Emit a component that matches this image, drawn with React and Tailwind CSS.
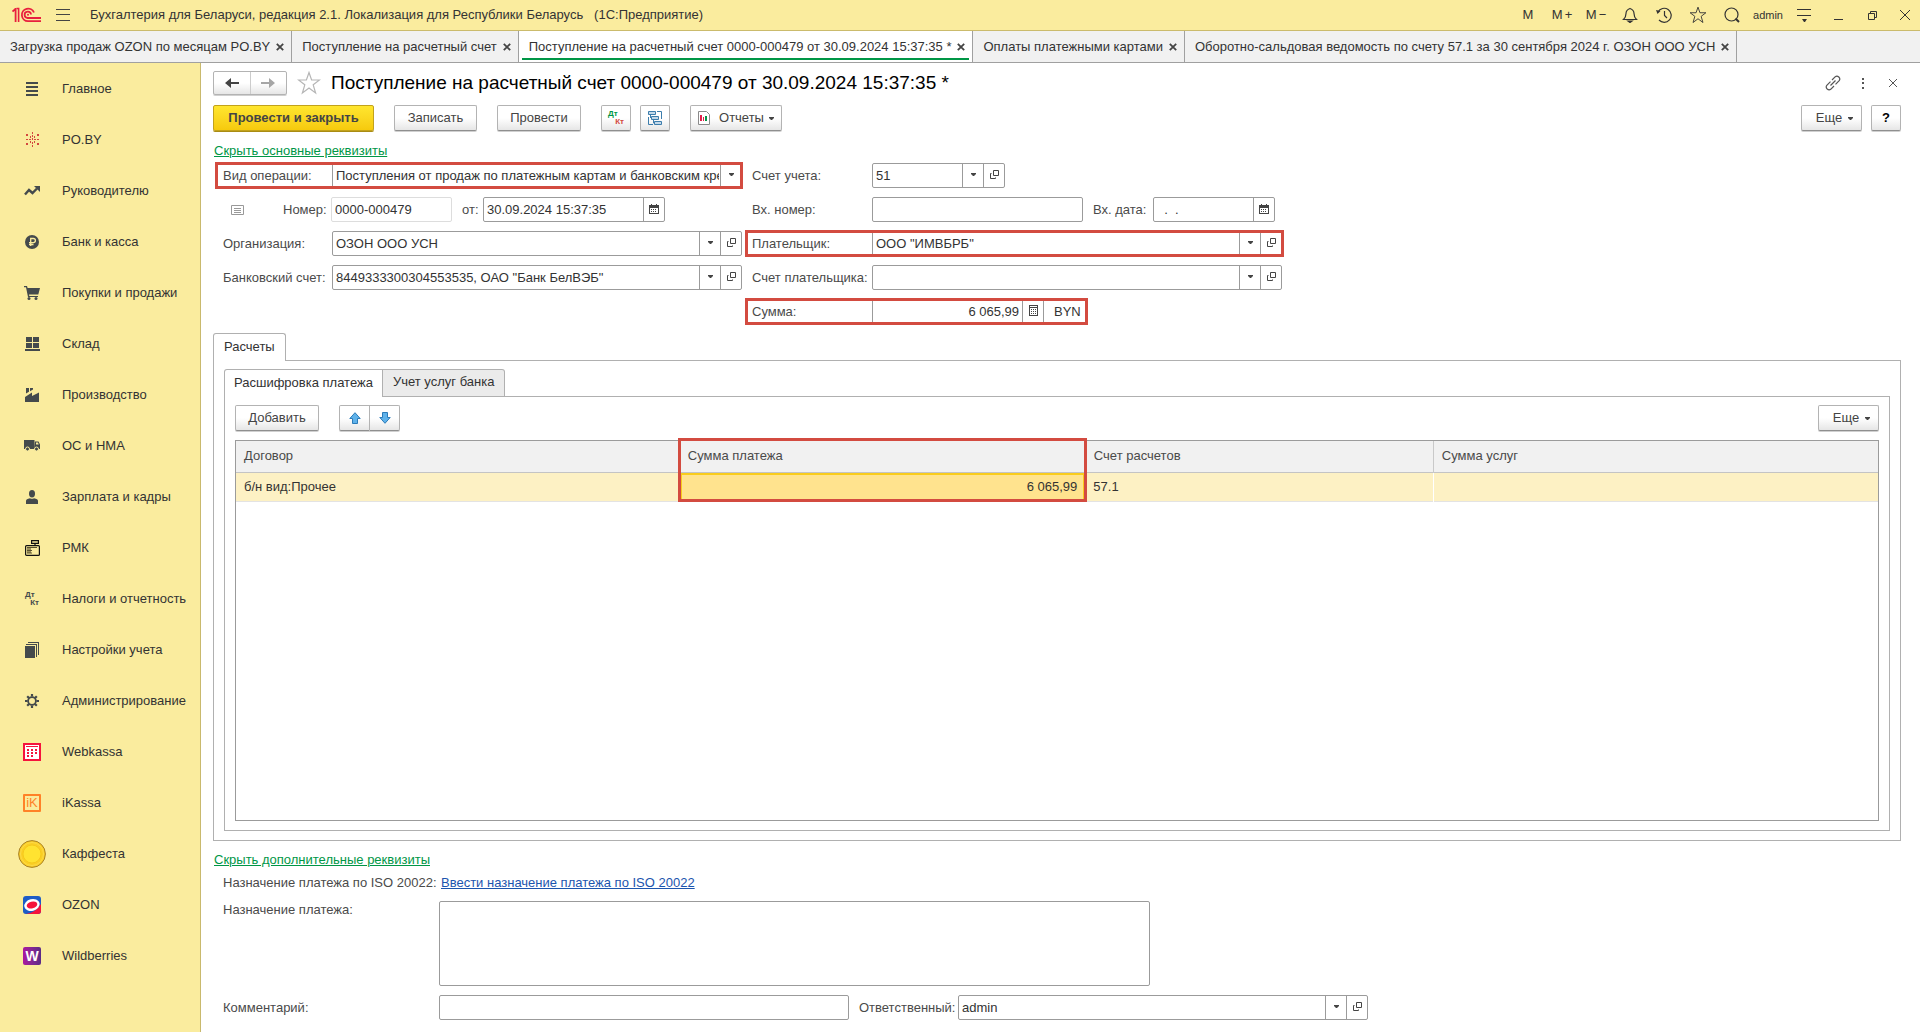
import React, { useState } from "react";

const Logo = () => (
  <svg width="30" height="16" viewBox="0 0 30 16" fill="none" stroke="#e8203e" strokeWidth="1.8">
    <path d="M0.5 4.5 L3.5 2 M3.6 1 V15" />
    <path d="M6.6 1 V15 M4.5 1.5 H7.4" strokeWidth="1.6" />
    <path d="M22 5.5 A6.3 6.3 0 1 0 16 14.2 H29" />
    <path d="M19 7.5 A3.2 3.2 0 1 0 16 11 H29" />
    <circle cx="16" cy="7.8" r="1" fill="#e8203e" stroke="none" />
  </svg>
);

const CaretIcon = () => (
  <svg width="5" height="3" viewBox="0 0 5 3" fill="#444"><path d="M0 0 H5 V1 L3 3 H2 L0 1 Z" /></svg>
);

const OpenIcon = () => (
  <svg width="9" height="9" viewBox="0 0 9 9" fill="none" stroke="#444">
    <path d="M3.5 0.5 H8.5 V5.5 H3.5 Z M1.5 3.5 H0.5 V8.5 H5.5 V7.5" />
  </svg>
);

const CalendarIcon = () => (
  <svg width="10" height="10" viewBox="0 0 10 10" fill="#444">
    <path d="M0 1 H2 V0 H3 V1 H7 V0 H8 V1 H10 V10 H0 Z M1 4 V9 H9 V4 Z" fillRule="evenodd" />
    <path d="M2 5h1v1h-1z M4 5h1v1h-1z M6 5h1v1h-1z M2 7h1v1h-1z M4 7h1v1h-1z M6 7h1v1h-1z" />
  </svg>
);

const CalcIcon = () => (
  <svg width="9" height="11" viewBox="0 0 9 11" fill="#444">
    <path d="M0 0 H9 V11 H0 Z M1 1 V2 H8 V1 Z M1 3 V10 H8 V3 Z" fillRule="evenodd" />
    <path d="M2 4h1v1h-1z M4 4h1v1h-1z M6 4h1v1h-1z M2 6h1v1h-1z M4 6h1v1h-1z M6 6h1v1h-1z M2 8h1v1h-1z M4 8h1v1h-1z M6 8h1v1h-1z" />
  </svg>
);

const StarIcon = ({ size, color }) => (
  <svg width={size} height={size} viewBox="0 0 24 24" fill="none" stroke={color} strokeWidth="1.2">
    <path d="M12 1.5 L14.6 9 H22.5 L16.2 13.8 L18.6 22 L12 17 L5.4 22 L7.8 13.8 L1.5 9 H9.4 Z" />
  </svg>
);

const sections = [
  { name: "Главное", icon: <svg width="12" height="14" fill="#444a4c"><path d="M0 0h12v2H0z M0 4h12v2H0z M0 8h12v2H0z M0 12h12v2H0z" /></svg> },
  {
    name: "PO.BY",
    icon: (
      <svg width="13" height="15" viewBox="0 0 13 15" fill="#d3483e">
        <path d="M6 0h1v2H6z M6 3h1v2H6z M6 6h1v2H6z M6 10h1v2H6z M6 13h1v2H6z M4 4h1v2H4z M0 2h2v2H0z M8 4h1v2H8z M11 2h2v2h-2z M4 9h1v2H4z M0 11h2v2H0z M8 9h1v2H8z M11 11h2v2h-2z M0 7h2v1H0z M3 7h2v1H3z M8 7h2v1H8z M11 7h2v1h-2z" />
      </svg>
    ),
  },
  {
    name: "Руководителю",
    icon: (
      <svg width="16" height="10" viewBox="0 0 16 10">
        <path d="M1 8.5 L5 4 L8.5 7 L13 2.5" fill="none" stroke="#444a4c" strokeWidth="2.4" />
        <path d="M10 0 H16 V6 Z" fill="#444a4c" />
      </svg>
    ),
  },
  {
    name: "Банк и касса",
    icon: (
      <svg width="14" height="14" viewBox="0 0 14 14">
        <circle cx="7" cy="7" r="7" fill="#444a4c" />
        <path d="M5.7 11 V3.5 H8.3 A2.1 2.1 0 0 1 8.3 7.7 H4 M4 9.5 H8.5" fill="none" stroke="#faec9e" strokeWidth="1.3" />
      </svg>
    ),
  },
  {
    name: "Покупки и продажи",
    icon: (
      <svg width="16" height="14" viewBox="0 0 16 14" fill="#444a4c">
        <path d="M0 0 H3 L3.6 2 H16 L14.3 8.5 H5 L5.3 10 H14 V11 H4 L2 1.2 H0 Z" />
        <circle cx="5" cy="12.5" r="1.5" /><circle cx="12" cy="12.5" r="1.5" />
      </svg>
    ),
  },
  { name: "Склад", icon: <svg width="15" height="14" fill="#444a4c"><path d="M1 0h6v5H1z M8 0h6v5H8z M1 6h6v5H1z M8 6h6v5H8z M0 12h15v2H0z" /></svg> },
  {
    name: "Производство",
    icon: (
      <svg width="14" height="14" viewBox="0 0 14 14" fill="#444a4c">
        <path d="M0 14 V9 L7 4.5 V8 L14 4.5 V14 Z M1 0 H4 V3.8 L1 5.6 Z M5 0 H8 V1.5 L5 3.2 Z" />
      </svg>
    ),
  },
  {
    name: "ОС и НМА",
    icon: (
      <svg width="16" height="11" viewBox="0 0 16 11" fill="#444a4c">
        <path d="M0 0 H10.5 V9 H0 Z M11 1.5 H14.5 L16 4.5 V9 H10.5 Z M12 2.5 V4.5 H14.8 L13.9 2.5 Z" fillRule="evenodd" />
        <circle cx="3.5" cy="9" r="2" stroke="#faec9e" /><circle cx="12.5" cy="9" r="2" stroke="#faec9e" />
      </svg>
    ),
  },
  {
    name: "Зарплата и кадры",
    icon: (
      <svg width="12" height="14" viewBox="0 0 12 14" fill="#444a4c">
        <ellipse cx="6" cy="3.7" rx="3" ry="3.7" /><path d="M0 14 V11 Q0 9 4 8.3 Q6 9.3 8 8.3 Q12 9 12 11 V14 Z" />
      </svg>
    ),
  },
  {
    name: "РМК",
    icon: (
      <svg width="15" height="16" viewBox="0 0 15 16" fill="none" stroke="#111" strokeWidth="1.2">
        <rect x="0.6" y="5.6" width="13.8" height="9.8" rx="1" /><path d="M6.6 0.6 H13.4 V3.4 H6.6 Z M10 3.5 V5.5" />
        <path d="M2 7.5 H12 M3 8 V13 M5 8 V13 M2 10.5 H7 M2 13 H7" stroke="#5a522c" strokeWidth="1.2" />
      </svg>
    ),
  },
  {
    name: "Налоги и отчетность",
    icon: (
      <span className="flex w-[14px] flex-col text-[8px] leading-[8px] font-bold text-[#444a4c]">
        <span>Дт</span><span className="text-right">Кт</span>
      </span>
    ),
  },
  {
    name: "Настройки учета",
    icon: (
      <svg width="14" height="16" fill="#444a4c"><path d="M0 4h10v12H0z M1 2h11v13h-1V3H1z M3 0h11v13h-1V1H3z" /></svg>
    ),
  },
  {
    name: "Администрирование",
    icon: (
      <svg width="14" height="14" viewBox="0 0 14 14" fill="none" stroke="#444a4c">
        <circle cx="7" cy="7" r="3.9" strokeWidth="1.8" />
        <path d="M7 0 V2.6 M7 11.4 V14 M0 7 H2.6 M11.4 7 H14 M2.2 2.2 L4 4 M10 10 L11.8 11.8 M2.2 11.8 L4 10 M10 4 L11.8 2.2" strokeWidth="2.2" />
      </svg>
    ),
  },
  {
    name: "Webkassa",
    icon: (
      <svg width="18" height="18" viewBox="0 0 18 18">
        <rect x="1" y="1" width="16" height="16" fill="#fff" stroke="#f5143c" strokeWidth="2" />
        <path d="M3 3h12v1H3z M4 6h2v2H4z M8 6h2v2H8z M12 6h2v2h-2z M4 9h2v2H4z M8 9h2v2H8z M12 9h2v2h-2z M4 12h2v2H4z M8 12h2v2H8z" fill="#f5143c" />
      </svg>
    ),
  },
  {
    name: "iKassa",
    icon: (
      <span className="flex h-[18px] w-[18px] items-center justify-center rounded-[1px] border-2 border-[#ff8228] text-[13px] leading-none text-[#ff8228]">iK</span>
    ),
  },
  {
    name: "Каффеста",
    icon: (
      <svg width="28" height="28" viewBox="0 0 28 28">
        <circle cx="14" cy="14" r="13.4" fill="#fbcf24" stroke="#a8822a" />
        <circle cx="14" cy="14" r="11.5" fill="none" stroke="#fcd94a" /><circle cx="14" cy="14" r="9" fill="#ffe331" stroke="#f5c81e" />
      </svg>
    ),
  },
  {
    name: "OZON",
    icon: (
      <svg width="18" height="18" viewBox="0 0 18 18">
        <rect width="18" height="18" rx="3" fill="#1d5cc6" />
        <path d="M3 18 Q12 17 18 8 V15 Q18 18 15 18 Z" fill="#f5143c" />
        <ellipse cx="9" cy="9" rx="6.6" ry="4.6" fill="#f5143c" stroke="#fff" strokeWidth="2.4" transform="rotate(-14 9 9)" />
      </svg>
    ),
  },
  {
    name: "Wildberries",
    icon: (
      <span className="flex h-[18px] w-[18px] items-center justify-center rounded-[2px] bg-linear-to-r from-[#ab15a0] to-[#5a2a86] text-[14px] leading-none font-bold text-white">W</span>
    ),
  },
];

const openTabs = [
  "Загрузка продаж OZON по месяцам PO.BY",
  "Поступление на расчетный счет",
  "Поступление на расчетный счет 0000-000479 от 30.09.2024 15:37:35 *",
  "Оплаты платежными картами",
  "Оборотно-сальдовая ведомость по счету 57.1 за 30 сентября 2024 г. ОЗОН ООО УСН",
];

const CloseCross = () => (
  <svg width="8" height="8" viewBox="0 0 8 8" stroke="#444" strokeWidth="1.8"><path d="M0.8 0.8 L7.2 7.2 M7.2 0.8 L0.8 7.2" /></svg>
);

const Button = ({ className = "", children, ...rest }) => (
  <button
    className={`flex h-[26px] items-center justify-center rounded-[2px] border border-[#b3b3b3] border-b-[#8f8f8f] bg-linear-to-b from-white from-50% to-[#e6e6e6] text-[#444] shadow-[0_1px_0_#d0d0d0] ${className}`}
    {...rest}
  >
    {children}
  </button>
);

// Red frame drawn over a field
const Mark = () => (
  <span className="pointer-events-none absolute -inset-px border-3 border-[#d34b40]" />
);

const Label = ({ htmlFor, className = "", children }) => (
  <label htmlFor={htmlFor} className={`shrink-0 text-[#4a4a4a] ${className}`}>{children}</label>
);

const box = "h-[25px] rounded-[2px] border border-[#9b9b9b] bg-white";
const sideButton = "flex h-full w-[21px] shrink-0 items-center justify-center border-l border-[#9b9b9b] pb-[2px]";

const SelectField = ({ id, value, open = true, className = "" }) => (
  <div className={`flex ${box} ${className}`}>
    <div className="relative h-full min-w-0 flex-1">
      <select id={id} className="block h-full w-full appearance-none bg-transparent pr-[22px] pl-[3px] outline-none">
        <option>{value}</option>
      </select>
      <span className="pointer-events-none absolute top-0 right-0 h-full">
        <span className={sideButton}><CaretIcon /></span>
      </span>
    </div>
    {open && <button className={sideButton} aria-label="Открыть"><OpenIcon /></button>}
  </div>
);

const DateField = ({ id, value, className = "" }) => (
  <div className={`flex ${box} ${className}`}>
    <input id={id} defaultValue={value} className="h-full min-w-0 flex-1 pl-[3px] outline-none" />
    <button className={sideButton} aria-label="Календарь"><CalendarIcon /></button>
  </div>
);

const TopBar = () => (
  <header className="flex h-[31px] shrink-0 items-center border-b border-[#cbbb6c] bg-[#faec9e] pl-3">
    <Logo />
    <button className="ml-3 p-[2px]" aria-label="Меню">
      <svg width="14" height="12" fill="#444"><path d="M0 0h14v1H0z M0 5h14v1H0z M0 11h14v1H0z" /></svg>
    </button>
    <span className="ml-[18px] whitespace-pre">Бухгалтерия для Беларуси, редакция 2.1. Локализация для Республики Беларусь   (1С:Предприятие)</span>
    <div className="ml-auto flex items-center">
      <button className="w-[34px] text-center">M</button>
      <button className="flex w-[34px] justify-center gap-[2px]">M<span>+</span></button>
      <button className="flex w-[34px] justify-center gap-[2px]">M<span>−</span></button>
      <button className="flex w-[34px] justify-center" aria-label="Оповещения">
        <svg width="16" height="16" viewBox="0 0 16 16" fill="none" stroke="#333" strokeWidth="1.2">
          <path d="M1.5 12.5 Q4 10 4 6.5 Q4 3 8 1.5 Q12 3 12 6.5 Q12 10 14.5 12.5 Z" /><path d="M6 14 H10 L8 15.5 Z" fill="#333" />
        </svg>
      </button>
      <button className="flex w-[34px] justify-center" aria-label="История">
        <svg width="16" height="16" viewBox="0 0 16 16" fill="none" stroke="#333" strokeWidth="1.2">
          <path d="M2 5 A7 7 0 1 1 3 13" /><path d="M8.5 4 V8.5 L11 11" /><path d="M0 3 L4.5 4 L1.5 7 Z" fill="#333" stroke="none" />
        </svg>
      </button>
      <button className="flex w-[34px] justify-center" aria-label="Избранное"><StarIcon size={18} color="#333" /></button>
      <button className="flex w-[34px] justify-center" aria-label="Поиск">
        <svg width="16" height="16" viewBox="0 0 16 16" fill="none" stroke="#333" strokeWidth="1.2">
          <circle cx="7.5" cy="7.5" r="6.5" /><path d="M11.5 11.5 L15 15" strokeWidth="2" />
        </svg>
      </button>
      <button className="px-1 text-[11px]">admin</button>
      <button className="flex w-[34px] justify-center" aria-label="Настройка">
        <svg width="14" height="13" fill="#333"><path d="M0 0h14v1H0z M0 6h14v1H0z M5 10h5l-2 3h-1z" /></svg>
      </button>
      <button className="flex w-[34px] justify-center" aria-label="Свернуть">
        <svg width="9" height="10" fill="#333"><path d="M0 9h9v1H0z" /></svg>
      </button>
      <button className="flex w-[34px] justify-center" aria-label="Развернуть">
        <svg width="9" height="9" viewBox="0 0 9 9" fill="none" stroke="#333"><path d="M0.5 2.5 H6.5 V8.5 H0.5 Z M2.5 2.5 V0.5 H8.5 V6.5 H6.5" /></svg>
      </button>
      <button className="flex w-[31px] justify-center" aria-label="Закрыть">
        <svg width="10" height="10" viewBox="0 0 10 10" stroke="#333"><path d="M0 0 L10 10 M10 0 L0 10" /></svg>
      </button>
    </div>
  </header>
);

const WindowTabs = () => {
  const [active, setActive] = useState(2);
  return (
    <nav className="flex h-8 shrink-0 border-b border-[#a0a0a0] bg-[#f1f1f1]">
      {openTabs.map((tab, i) => (
        <div
          key={i}
          className={`relative flex items-center gap-[6px] border-r border-[#a0a0a0] pr-[7px] pl-[10px] ${i === active ? "bg-white" : ""}`}
        >
          <button className="whitespace-nowrap" onClick={() => setActive(i)}>{tab}</button>
          <button aria-label="Закрыть вкладку"><CloseCross /></button>
          {i === active && <span className="absolute inset-x-[3px] bottom-[2px] h-[2px] bg-[#009646]" />}
        </div>
      ))}
    </nav>
  );
};

const SideBar = () => (
  <aside className="w-[201px] shrink-0 border-r border-[#c9b96d] bg-[#faec9e]">
    {sections.map((s) => (
      <a key={s.name} href="#" className="flex h-[51px] items-center">
        <span className="flex w-[62px] justify-center pl-[2px]">{s.icon}</span>
        <span>{s.name}</span>
      </a>
    ))}
  </aside>
);

const DocumentHeader = () => (
  <>
    <div className="flex h-6 items-center">
      <div className="flex h-6 w-[74px] rounded-[2px] border border-[#b3b3b3] bg-linear-to-b from-white from-50% to-[#e6e6e6] shadow-[0_1px_0_#d0d0d0]">
        <button className="flex flex-1 items-center justify-center border-r border-[#ccc]" aria-label="Назад">
          <svg width="14" height="10" viewBox="0 0 14 10" fill="#444"><path d="M0 5 L6 0 V4 H14 V6 H6 V10 Z" /></svg>
        </button>
        <button className="flex flex-1 items-center justify-center" aria-label="Вперед">
          <svg width="14" height="10" viewBox="0 0 14 10" fill="#a6a6a6"><path d="M14 5 L8 0 V4 H0 V6 H8 V10 Z" /></svg>
        </button>
      </div>
      <button className="ml-[10px]" aria-label="В избранное"><StarIcon size={24} color="#b5b5b5" /></button>
      <h1 className="ml-[10px] text-[19px] whitespace-nowrap text-black">
        Поступление на расчетный счет 0000-000479 от 30.09.2024 15:37:35 *
      </h1>
      <div className="ml-auto -mr-[7px] flex items-center">
        <button className="flex w-[30px] justify-center" aria-label="Ссылка">
          <svg width="16" height="16" viewBox="0 0 16 16" fill="none" stroke="#555" strokeWidth="1.2">
            <path d="M7 5 L10.3 1.7 Q12 0.3 13.8 2 Q15.6 3.8 14.2 5.6 L10.5 9.3 M9 11 L5.7 14.3 Q4 15.7 2.2 14 Q0.4 12.2 1.8 10.4 L5.5 6.7 M5.5 10.5 L10.5 5.5" />
          </svg>
        </button>
        <button className="flex w-[30px] justify-center" aria-label="Еще действия">
          <svg width="2" height="11" fill="#555"><path d="M0 0h2v2H0z M0 4h2v2H0z M0 9h2v2H0z" /></svg>
        </button>
        <button className="flex w-[30px] justify-center" aria-label="Закрыть">
          <svg width="8" height="8" viewBox="0 0 8 8" stroke="#555"><path d="M0 0 L8 8 M8 0 L0 8" /></svg>
        </button>
      </div>
    </div>

    <div className="mt-[10px] flex items-center">
      <button className="h-[26px] w-[161px] rounded-[2px] border border-[#c2a21c] bg-linear-to-b from-[#ffe62e] to-[#f6ca0c] font-bold text-[#444] shadow-[0_1px_0_#a98c14]">
        Провести и закрыть
      </button>
      <Button className="ml-5 w-[83px]">Записать</Button>
      <Button className="ml-5 w-[84px]">Провести</Button>
      <Button className="ml-5 w-[30px]">
        <span className="flex w-4 flex-col text-[8px] leading-[8px] font-bold">
          <span className="text-left text-[#009646]">Дт</span><span className="text-right text-[#d3483e]">Кт</span>
        </span>
      </Button>
      <Button className="ml-[9px] w-[30px]" aria-label="Связанные документы">
        <svg width="14" height="14" viewBox="0 0 14 14" fill="#c3d9ea" stroke="#3c7dac">
          <path d="M0.5 0.5h7v3h-7z M3.5 5.5h7v3h-7z M6.5 10.5h7v3h-7z" />
          <path d="M9 0.5 H13.5 V8 M0.5 6 V13.5 H5 M2.5 4 V7 M5.5 9 V12 H6.5" fill="none" />
        </svg>
      </Button>
      <Button className="ml-5 w-[92px]">
        <svg width="12" height="14" viewBox="0 0 12 14">
          <path d="M0.5 0.5 H8.5 L11.5 3.5 V13.5 H0.5 Z" fill="#fff" stroke="#8a8a8a" />
          <path d="M2 4h2v6H2z" fill="#e0204a" /><path d="M5 6h1v4H5z" fill="#e0204a" /><path d="M7 5h2v5H7z" fill="#009646" />
        </svg>
        <span className="mr-[5px] ml-[9px]">Отчеты</span>
        <CaretIcon />
      </Button>
      <Button className="ml-auto w-[61px] gap-[6px] pl-[6px]">Еще <CaretIcon /></Button>
      <Button className="ml-[9px] w-[30px] font-bold text-black">?</Button>
    </div>
  </>
);

const MainFields = () => (
  <div className="flex gap-1 pt-[3px]">
    <div className="flex w-[529px] flex-col gap-[9px]">
      <div className="relative ml-[3px] flex items-center pl-[7px]">
        <Label htmlFor="operation" className="w-[109px]">Вид операции:</Label>
        <SelectField id="operation" value="Поступления от продаж по платежным картам и банковским кредитам" open={false} className="flex-1" />
        <Mark />
      </div>
      <div className="flex items-center pl-[18px]">
        <svg width="13" height="10" viewBox="0 0 13 10" fill="none" stroke="#999"><path d="M0.5 0.5h12v9h-12z M3 3.5h7 M3 5.5h7 M3 7.5h7" /></svg>
        <Label htmlFor="number" className="ml-[39px] w-12">Номер:</Label>
        <input id="number" defaultValue="0000-000479" className="h-[25px] w-[121px] rounded-[2px] border border-[#ddd] px-[3px]" />
        <Label htmlFor="date" className="ml-[10px] w-[21px]">от:</Label>
        <DateField id="date" value="30.09.2024 15:37:35" className="w-[182px]" />
      </div>
      <div className="flex items-center pl-[10px]">
        <Label htmlFor="org" className="w-[109px]">Организация:</Label>
        <SelectField id="org" value="ОЗОН ООО УСН" className="flex-1" />
      </div>
      <div className="flex items-center pl-[10px]">
        <Label htmlFor="bank" className="w-[109px]">Банковский счет:</Label>
        <SelectField id="bank" value={'8449333300304553535, ОАО "Банк БелВЭБ"'} className="flex-1" />
      </div>
    </div>

    <div className="flex flex-col gap-[9px]">
      <div className="flex items-center pl-[6px]">
        <Label htmlFor="account" className="w-[120px]">Счет учета:</Label>
        <SelectField id="account" value="51" className="w-[133px]" />
      </div>
      <div className="flex items-center pl-[6px]">
        <Label htmlFor="inNumber" className="w-[120px]">Вх. номер:</Label>
        <input id="inNumber" className={`w-[211px] px-[3px] ${box}`} />
        <Label htmlFor="inDate" className="ml-[10px] w-[60px]">Вх. дата:</Label>
        <DateField id="inDate" value="  .  ." className="w-[122px]" />
      </div>
      <div className="relative flex items-center pr-px pl-[6px]">
        <Label htmlFor="payer" className="w-[120px]">Плательщик:</Label>
        <SelectField id="payer" value={'ООО "ИМВБРБ"'} className="w-[410px]" />
        <Mark />
      </div>
      <div className="flex items-center pl-[6px]">
        <Label htmlFor="payerAccount" className="w-[120px]">Счет плательщика:</Label>
        <SelectField id="payerAccount" value="" className="w-[410px]" />
      </div>
      <div className="relative flex items-center self-start pr-[6px] pl-[6px]">
        <Label htmlFor="sum" className="w-[120px]">Сумма:</Label>
        <div className={`flex w-[172px] ${box}`}>
          <input id="sum" defaultValue="6 065,99" className="h-full min-w-0 flex-1 pr-[3px] text-right outline-none" />
          <button className={sideButton} aria-label="Калькулятор"><CalcIcon /></button>
        </div>
        <span className="ml-[10px]">BYN</span>
        <Mark />
      </div>
    </div>
  </div>
);

const PaymentTable = () => (
  <div className="min-h-[120px] flex-1 border border-[#9b9b9b] bg-white">
    <table className="w-full table-fixed border-collapse">
      <thead>
        <tr className="h-[31px] border-b border-[#c4c4c4] bg-[#f1f1f1] text-left text-[#4a4a4a]">
          <th className="w-[27%] border-r border-[#c9c9c9] px-2 font-normal">Договор</th>
          <th className="relative w-[406px] border-r border-[#c9c9c9] px-2 font-normal">
            Сумма платежа
            {/* frame over the whole column: header and its row */}
            <span className="pointer-events-none absolute -inset-x-[2px] -top-[3px] z-10 h-[64px] border-3 border-[#d34b40]" />
          </th>
          <th className="w-[348px] border-r border-[#c9c9c9] px-2 font-normal">Счет расчетов</th>
          <th className="px-2 font-normal">Сумма услуг</th>
        </tr>
      </thead>
      <tbody>
        <tr className="h-[29px] border-b border-[#e3e3e3] bg-[#fdf1c4]">
          <td className="border-r border-white px-2">б/н вид:Прочее</td>
          <td className="bg-[#ffe38e] px-2 text-right shadow-[inset_0_0_0_2px_#f9cc1c]">6 065,99</td>
          <td className="border-r border-white px-2">57.1</td>
          <td className="px-2"></td>
        </tr>
      </tbody>
    </table>
  </div>
);

const Settlements = () => (
  <section className="mt-[9px] flex flex-1 flex-col">
    <div className="flex">
      <button className="relative z-10 -mb-px h-7 rounded-t-[3px] border border-b-0 border-[#b0b0b0] bg-white px-[10px] pb-[2px]">Расчеты</button>
    </div>
    <div className="flex flex-1 flex-col border border-[#b0b0b0] px-[10px] pt-2 pb-[9px]">
      <div className="flex">
        <button className="relative z-10 -mb-px h-7 rounded-tl-[3px] border border-b-0 border-[#b0b0b0] bg-white px-[9px] pb-[2px]">Расшифровка платежа</button>
        <button className="-mb-px h-7 rounded-tr-[3px] border border-l-0 border-[#b0b0b0] bg-[#ebebeb] px-[10px] pb-[2px]">Учет услуг банка</button>
      </div>
      <div className="flex flex-1 flex-col border border-[#b0b0b0] px-[10px] pt-2 pb-[9px]">
        <div className="flex items-center pb-[9px]">
          <Button className="w-[84px]">Добавить</Button>
          <Button className="ml-5 w-[31px] rounded-r-none" aria-label="Вверх">
            <svg width="12" height="12" viewBox="0 0 12 12" fill="#5fb2ea" stroke="#2b7bb9"><path d="M6 0.7 L11.2 6.5 H8.5 V11.5 H3.5 V6.5 H0.8 Z" /></svg>
          </Button>
          <Button className="w-[30px] rounded-l-none border-l-0" aria-label="Вниз">
            <svg width="12" height="12" viewBox="0 0 12 12" fill="#5fb2ea" stroke="#2b7bb9"><path d="M6 11.3 L11.2 5.5 H8.5 V0.5 H3.5 V5.5 H0.8 Z" /></svg>
          </Button>
          <Button className="ml-auto w-[61px] gap-[6px] pl-[6px]">Еще <CaretIcon /></Button>
        </div>
        <PaymentTable />
      </div>
    </div>
  </section>
);

const ExtraFields = () => (
  <>
    <div className="mt-[11px] pl-px">
      <a href="#" className="text-[#009646] underline">Скрыть дополнительные реквизиты</a>
    </div>
    <div className="mt-[7px] flex pl-[10px]">
      <span className="w-[218px] text-[#4a4a4a]">Назначение платежа по ISO 20022:</span>
      <a href="#" className="text-[#1c55ae] underline">Ввести назначение платежа по ISO 20022</a>
    </div>
    <div className="mt-[10px] flex pl-[10px]">
      <Label htmlFor="purpose" className="w-[216px] pt-px">Назначение платежа:</Label>
      <textarea id="purpose" className="h-[85px] w-[711px] resize-none rounded-[2px] border border-[#9b9b9b] px-[3px]" />
    </div>
    <div className="mt-[9px] mb-3 flex items-center pl-[10px]">
      <Label htmlFor="comment" className="w-[216px]">Комментарий:</Label>
      <input id="comment" className={`w-[410px] px-[3px] ${box}`} />
      <Label htmlFor="responsible" className="ml-[10px] w-[99px]">Ответственный:</Label>
      <SelectField id="responsible" value="admin" className="w-[410px]" />
    </div>
  </>
);

const App = () => {
  return (
    <div className="flex min-h-screen flex-col bg-white font-['Liberation_Sans',Arial,sans-serif] text-[13px] leading-4 text-[#333]">
      <TopBar />
      <WindowTabs />
      <div className="flex flex-1">
        <SideBar />
        <main className="flex min-w-0 flex-1 flex-col pt-2 pr-[19px] pl-3">
          <DocumentHeader />
          <div className="mt-3 pb-px pl-px">
            <a href="#" className="text-[#009646] underline">Скрыть основные реквизиты</a>
          </div>
          <MainFields />
          <Settlements />
          <ExtraFields />
        </main>
      </div>
    </div>
  );
};

export default App;
